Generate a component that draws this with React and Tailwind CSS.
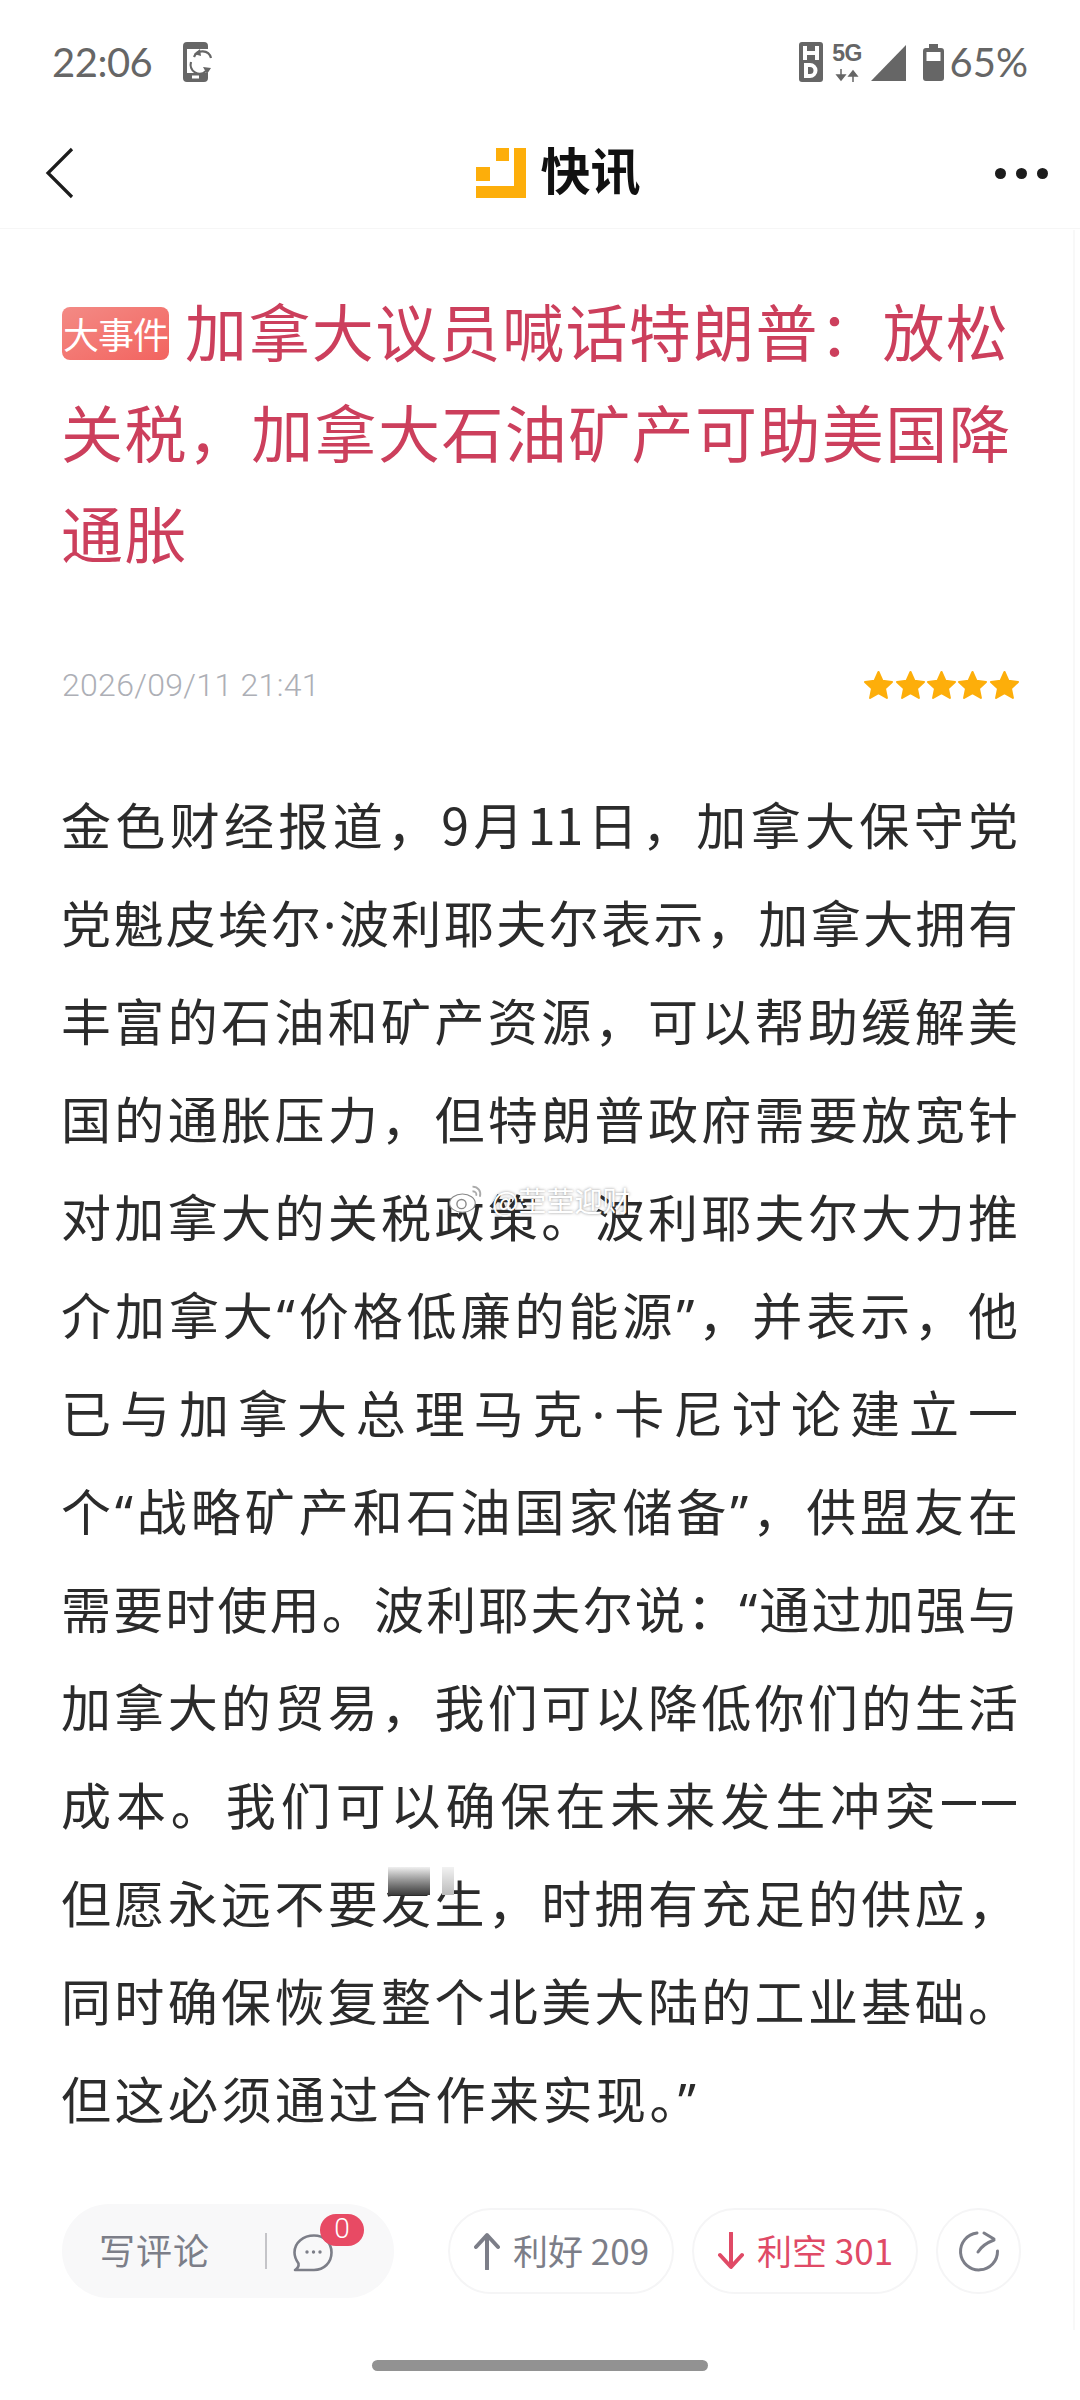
import React from "react";

const CJK = { fontFamily: '"Noto Sans CJK SC", "Noto Sans", sans-serif' };
const LATIN = { fontFamily: '"Noto Sans", sans-serif' };

const body = [
  "金色财经报道，9月11日，加拿大保守党",
  "党魁皮埃尔·波利耶夫尔表示，加拿大拥有",
  "丰富的石油和矿产资源，可以帮助缓解美",
  "国的通胀压力，但特朗普政府需要放宽针",
  "对加拿大的关税政策。波利耶夫尔大力推",
  "介加拿大“价格低廉的能源”，并表示，他",
  "已与加拿大总理马克·卡尼讨论建立一",
  "个“战略矿产和石油国家储备”，供盟友在",
  "需要时使用。波利耶夫尔说：“通过加强与",
  "加拿大的贸易，我们可以降低你们的生活",
];
const body2 = [
  "但愿永远不要发生，时拥有充足的供应，",
  "同时确保恢复整个北美大陆的工业基础。",
];

function Rich({ text }) {
  return text.split(/([“”·])/).map((p, i) =>
    /^[“”·]$/.test(p) ? <span key={i} style={LATIN}>{p}</span> : <React.Fragment key={i}>{p}</React.Fragment>
  );
}

function Star() {
  return (
    <svg width="33" height="33" viewBox="0 0 24 24" className="-mx-[0.8px]">
      <path fill="#fdae0a" stroke="#fdae0a" strokeWidth="1.5" strokeLinejoin="round" d="M12 2.2l2.9 6.4 6.9.8-5.1 4.7 1.4 6.9-6.1-3.5-6.1 3.5 1.4-6.9-5.1-4.7 6.9-.8z" />
    </svg>
  );
}

export default function App() {
  return (
    <div className="relative w-[1080px] h-[2400px] bg-white overflow-hidden flex flex-col" style={CJK}>
      {/* Status bar */}
      <div className="h-[124px] flex items-start justify-between pl-[52px] pr-[52px] pt-[42px] text-[#666]">
        <div className="flex items-center h-[40px]">
          <span className="text-[40px] leading-none tracking-[-0.5px] w-[131px]" style={{ fontFamily: "Lato, sans-serif" }}>22:06</span>
          <svg width="30" height="40" viewBox="0 0 30 40">
            <path d="M4 0h17a4 4 0 0 1 4 4v3H4v24h21v5a4 4 0 0 1-4 4H4a4 4 0 0 1-4-4V4a4 4 0 0 1 4-4z" fill="#666" />
            <rect x="9" y="33.5" width="7" height="3" fill="#fff" />
            <path d="M11 15a9 9 0 0 1 17 1M8 20a9 9 0 0 0 15 9" fill="none" stroke="#666" strokeWidth="2.2" />
            <path d="M17 7l-6 5 7 2zM24 32l4-6-8-1z" fill="#666" />
          </svg>
        </div>
        <div className="flex items-center h-[40px]">
          <svg width="24" height="40" viewBox="0 0 24 40" className="mr-[9px]">
            <rect x="0" y="0" width="24" height="40" rx="3" fill="#666" />
            <path d="M6 4v14M18 4v14M6 11h12" stroke="#fff" strokeWidth="4" fill="none" />
            <path d="M7 23h4a5.5 5.5 0 0 1 0 11H7z" stroke="#fff" strokeWidth="4" fill="none" />
          </svg>
          <div className="w-[31px] h-[40px] flex flex-col items-center mr-[8px]">
            <span className="text-[23px] leading-[22px] font-bold tracking-[-0.5px]" style={{ fontFamily: '"Liberation Sans", sans-serif' }}>5G</span>
            <svg width="24" height="13" viewBox="0 0 24 13" className="mt-[5px]">
              <path d="M6 0v6M2 6h8l-4 5zM18 13V7M14 7h8l-4-5z" fill="#666" stroke="#666" strokeWidth="1.5" />
            </svg>
          </div>
          <svg width="35" height="36" viewBox="0 0 35 36" className="mr-[17px] mt-[1px]">
            <path d="M35 0v36H0z" fill="#666" />
          </svg>
          <svg width="21" height="37" viewBox="0 0 21 37" className="mr-[6px]">
            <path d="M6 0h9v4h3a3 3 0 0 1 3 3v27a3 3 0 0 1-3 3H3a3 3 0 0 1-3-3V7a3 3 0 0 1 3-3h3z" fill="#666" />
            <rect x="3.5" y="8" width="14" height="9" fill="#fff" />
          </svg>
          <span className="text-[40px] leading-none" style={{ fontFamily: "Lato, sans-serif" }}>65%</span>
        </div>
      </div>

      {/* Nav */}
      <div className="relative h-[105px] flex items-start justify-center border-b border-[#f6f6f6] pl-[36px] pt-[19px]">
        <svg className="absolute left-[44px] top-[23px]" width="32" height="52" viewBox="0 0 32 52">
          <path d="M28 2L4 26l24 24" fill="none" stroke="#1c1c1c" strokeWidth="3.2" />
        </svg>
        <svg width="50" height="50" viewBox="0 0 50 50" className="mr-[15px] mt-[5px]">
          <path d="M38 0h12v50H0V38h38z" fill="#fdae0a" />
          <rect x="20" y="0" width="13" height="13" fill="#fdae0a" />
          <rect x="0" y="19" width="14" height="14" fill="#fdae0a" />
        </svg>
        <span className="text-[50px] leading-[50px] font-bold text-[#111]">快讯</span>
        <div className="absolute right-[32px] top-[44px] flex gap-[10px]">
          <div className="w-[11px] h-[11px] rounded-full bg-[#1c1c1c]" />
          <div className="w-[11px] h-[11px] rounded-full bg-[#1c1c1c]" />
          <div className="w-[11px] h-[11px] rounded-full bg-[#1c1c1c]" />
        </div>
      </div>

      {/* Title */}
      <div className="pl-[61px] pr-[62px] pt-[51px] text-[62px] leading-[101px] text-[#cc3f5c] w-[1080px]">
        <div className="flex items-center h-[101px]">
          <span className="w-[107px] h-[53px] ml-[1px] mr-[16px] mt-[5px] rounded-[8px] text-white text-[36px] leading-[53px] text-center bg-gradient-to-br from-[#f38a85] to-[#f2635f] tracking-[-1px] shrink-0">大事件</span>
          <span className="tracking-[1.4px] whitespace-nowrap">加拿大议员喊话特朗普：放松</span>
        </div>
        <div className="tracking-[1.4px] whitespace-nowrap">关税，加拿大石油矿产可助美国降</div>
        <div className="tracking-[1.4px]">通胀</div>
      </div>

      {/* Meta */}
      <div className="px-[62px] pt-[46px] flex items-center justify-between h-[90px] mt-[34px]">
        <span className="text-[32px] leading-none text-[#adafb6] tracking-[0.3px]" style={{ fontFamily: "Roboto, sans-serif", fontWeight: 300 }}>2026/09/11 21:41</span>
        <div className="flex mr-[-2px]">
          <Star /><Star /><Star /><Star /><Star />
        </div>
      </div>

      {/* Body */}
      <div className="pl-[61px] pr-[62px] pt-[67px] text-[50px] leading-[98px] text-[#2b2b2b] w-[1080px]">
        {body.map((l, i) => (
          <div key={i} className="[text-align-last:justify] whitespace-nowrap h-[98px]"><Rich text={l} /></div>
        ))}
        <div className="flex h-[98px] items-center">
          <div className="w-[874px] [text-align-last:justify] whitespace-nowrap">成本。我们可以确保在未来发生冲突</div>
          <div className="ml-[7px] w-[34px] h-[4px] bg-[#2b2b2b]" />
          <div className="ml-[6px] w-[34px] h-[4px] bg-[#2b2b2b]" />
        </div>
        {body2.map((l, i) => (
          <div key={i} className="[text-align-last:justify] whitespace-nowrap h-[98px]">{l}</div>
        ))}
        <div className="tracking-[3.5px]">但这必须通过合作来实现。<span style={LATIN}>”</span></div>
      </div>

      {/* Footer */}
      <div className="mt-[55px] pl-[62px] flex items-center">
        <div className="relative w-[332px] h-[94px] rounded-[47px] bg-[#f8f8f9] flex items-center pl-[37px]">
          <span className="text-[36px] leading-none text-[#7c7e88] tracking-[1px] whitespace-nowrap mb-[5px]">写评论</span>
          <div className="w-[2px] h-[36px] bg-[#c4c4c8] ml-[55px] shrink-0" />
          <svg width="40" height="38" viewBox="0 0 40 38" className="ml-[26px] mt-[4px] shrink-0">
            <path d="M21 1.5c10 0 17.5 7 17.5 17 0 10-7.5 17.5-17.5 17.5H2c2.500-1.500 4-3.500 3.500-6.500C3 26 1.500 22.500 1.500 18.500 1.500 8.500 10.500 1.500 21 1.500z" fill="none" stroke="#7c7e88" strokeWidth="2.6" strokeLinejoin="round" />
            <circle cx="14" cy="18" r="1.7" fill="#7c7e88" /><circle cx="20.500" cy="18" r="1.7" fill="#7c7e88" /><circle cx="27" cy="18" r="1.7" fill="#7c7e88" />
          </svg>
          <span className="absolute left-[258px] top-[10px] w-[44px] h-[32px] rounded-[16px] bg-[#e84a64] text-white text-[28px] leading-[30px] text-center" style={{ fontFamily: "Roboto, sans-serif", fontWeight: 300 }}>0</span>
        </div>
        <div className="ml-[54px] w-[226px] h-[86px] rounded-[43px] border-2 border-[#f5f5f6] flex items-center justify-center text-[#7c7e88]">
          <svg width="28" height="38" viewBox="0 0 28 38" className="mr-[12px]">
            <path d="M14 37V4M3 15L14 3l11 12" fill="none" stroke="#7c7e88" strokeWidth="4" strokeLinecap="round" strokeLinejoin="round" />
          </svg>
          <span className="text-[35px] leading-none whitespace-nowrap mb-[3px]">利好 209</span>
        </div>
        <div className="ml-[18px] w-[226px] h-[86px] rounded-[43px] border-2 border-[#f5f5f6] flex items-center justify-center text-[#e04a66]">
          <svg width="28" height="38" viewBox="0 0 28 38" className="mr-[12px]">
            <path d="M14 1v33M3 23l11 12 11-12" fill="none" stroke="#e04a66" strokeWidth="4" strokeLinecap="round" strokeLinejoin="round" />
          </svg>
          <span className="text-[35px] leading-none whitespace-nowrap mb-[3px]">利空 301</span>
        </div>
        <div className="ml-[18px] w-[85px] h-[86px] rounded-[43px] border-2 border-[#f5f5f6] flex items-center justify-center">
          <svg width="42" height="42" viewBox="0 0 42 42">
            <path d="M19 3A18.500 18.500 0 1 0 39.500 21" fill="none" stroke="#7c7e88" strokeWidth="3" strokeLinecap="round" />
            <path d="M20 22C23 17 28 13 36 10M26 3l10 6" fill="none" stroke="#7c7e88" strokeWidth="3" strokeLinecap="round" />
          </svg>
        </div>
      </div>

      {/* Home indicator */}
      <div className="mt-[62px] mx-auto w-[336px] h-[11px] rounded-[6px] bg-[#929292]" />

      {/* Faint right edge line */}
      <div className="absolute left-[1073px] top-[230px] w-[2px] h-[2100px] bg-[#f8f8f8]" />

      {/* Watermark overlay */}
      <div className="absolute left-[448px] top-[1183px] flex items-center text-white text-[28px] leading-none" style={{ textShadow: "0 0 3px rgba(70,70,70,.6)" }}>
        <svg width="38" height="33" viewBox="0 0 40 36" className="mr-[6px]">
          <ellipse cx="15" cy="22" rx="14" ry="10" fill="#fff" stroke="#888" strokeWidth="1.2" />
          <circle cx="14" cy="23" r="5" fill="none" stroke="#888" strokeWidth="1.5" />
          <path d="M26 4c6 0 10 5 8 11M26 9c3 0 5 2 4 5" fill="none" stroke="#aaa" strokeWidth="2" />
        </svg>
        <span>@茔茔迎财</span>
      </div>

      {/* Blur artefacts */}
      <div className="absolute left-[388px] top-[1867px] w-[42px] h-[28px] bg-gradient-to-b from-[#f0f0f0] to-[#3c3c3c]" />
      <div className="absolute left-[442px] top-[1867px] w-[12px] h-[28px] bg-gradient-to-b from-[#f2f2f2] to-[#bbbbbb]" />
    </div>
  );
}
